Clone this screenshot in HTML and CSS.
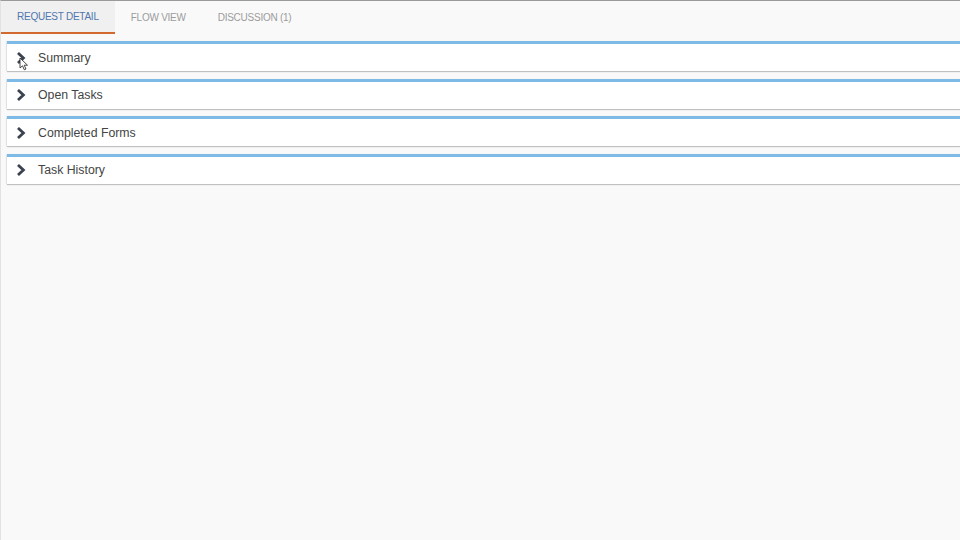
FILE: index.html
```html
<!DOCTYPE html>
<html lang="en">
<head>
  <meta charset="UTF-8">
  <title>Request Detail</title>
  <link rel="stylesheet" href="styles.css">
</head>
<body>

  <div class="tabs">
    <div class="tab active">REQUEST DETAIL</div>
    <div class="tab">FLOW VIEW</div>
    <div class="tab">DISCUSSION (1)</div>
  </div>

  <div class="panels">
    <div class="panel">
      <svg class="chevron" width="10" height="12" viewBox="0 0 10 12"><path d="M2 1 L7.4 6 L2 11" fill="none" stroke="#3b4250" stroke-width="2.8"/></svg>
      <span class="panel-title">Summary</span>
      <svg class="cursor" width="10" height="14" viewBox="0 0 10 14"><path d="M1 1 L1 11 L3.5 8.8 L5.3 12.8 L7 12 L5.2 8.2 L8.5 8.2 Z" fill="#fff" stroke="#333" stroke-width="0.9" stroke-linejoin="round"/></svg>
    </div>
    <div class="panel">
      <svg class="chevron" width="10" height="12" viewBox="0 0 10 12"><path d="M2 1 L7.4 6 L2 11" fill="none" stroke="#3b4250" stroke-width="2.8"/></svg>
      <span class="panel-title">Open Tasks</span>
    </div>
    <div class="panel">
      <svg class="chevron" width="10" height="12" viewBox="0 0 10 12"><path d="M2 1 L7.4 6 L2 11" fill="none" stroke="#3b4250" stroke-width="2.8"/></svg>
      <span class="panel-title">Completed Forms</span>
    </div>
    <div class="panel">
      <svg class="chevron" width="10" height="12" viewBox="0 0 10 12"><path d="M2 1 L7.4 6 L2 11" fill="none" stroke="#3b4250" stroke-width="2.8"/></svg>
      <span class="panel-title">Task History</span>
    </div>
  </div>

</body>
</html>
```

FILE: styles.css
```css
html, body {
  height: 100%;
}

body {
  margin: 0;
  font-family: "Liberation Sans", Arial, sans-serif;
  background-color: #f9f9f9;
  border-top: 1px solid #9a9a9a;
  border-left: 1px solid #e2e2e2;
  box-sizing: border-box;
  overflow: hidden;
}

.tabs {
  display: flex;
  height: 33px;
}

.tab {
  padding: 0 16px;
  font-size: 10px;
  letter-spacing: -0.25px;
  line-height: 33px;
  color: #9c9c9c;
  cursor: pointer;
}

.tab.active {
  margin-left: -1px;
  padding-left: 17px;
  background-color: #f0f0f0;
  color: #4f76ae;
  border-bottom: 2px solid #d2692e;
  height: 31px;
  line-height: 31px;
}

.panels {
  padding: 7px 0 0 6px;
}

.panel {
  position: relative;
  display: flex;
  align-items: center;
  height: 27px;
  margin-bottom: 7.5px;
  background-color: #fff;
  border-top: 3px solid #7dbbe6;
  box-shadow: 0 1px 1px rgba(0, 0, 0, 0.22), -1px 0 1px rgba(0, 0, 0, 0.06);
}

.chevron {
  margin-left: 9px;
  margin-right: 12px;
}

.panel-title {
  font-size: 12.3px;
  color: #444;
}

.cursor {
  position: absolute;
  left: 12px;
  top: 13px;
}
```
